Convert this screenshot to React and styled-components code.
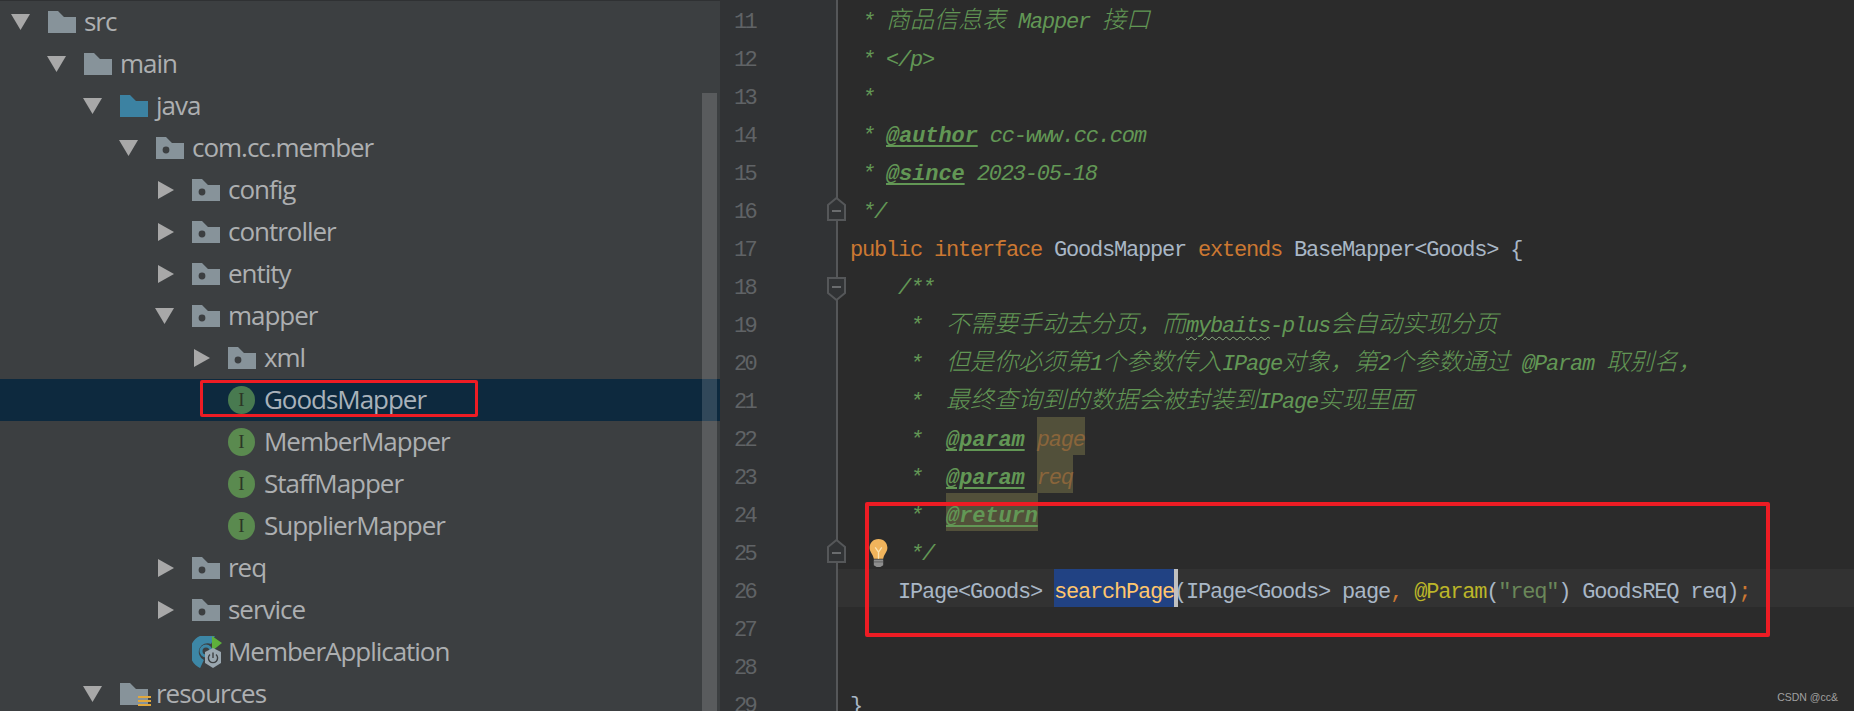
import styled, { createGlobalStyle } from "styled-components";

const GlobalStyle = createGlobalStyle`
  html, body {
    margin: 0;
    padding: 0;
    background: #2b2b2b;
    overflow: hidden;
  }
`;

const Screen = styled.div`
  position: relative;
  display: flex;
  width: 1854px;
  height: 711px;
  overflow: hidden;
  background: #2b2b2b;
`;

/* project tree */
const Tree = styled.div`
  position: relative;
  flex: 0 0 720px;
  padding-top: 1px;
  background: #3c3f41;
  box-shadow: inset 0 1px 0 #2f3133;
`;

const TreeRow = styled.div`
  display: flex;
  align-items: center;
  height: 42px;
  padding-left: ${(props) => props.depth * 36 + 11}px;
  background: ${(props) => (props.selected ? "#0d293e" : "transparent")};
`;

const ArrowSlot = styled.span`
  flex: 0 0 37px;
  display: flex;
  align-items: center;
  height: 42px;
`;

const Arrow = styled.svg`
  display: block;
  fill: #a8a8a8;
  margin-left: ${(props) => (props.open ? "0" : "3px")};
`;

const IconSlot = styled.span`
  flex: 0 0 28px;
  min-width: 0;
  display: flex;
  align-items: center;
  height: 42px;
  margin-right: 8px;
`;

const FolderIcon = styled.svg`
  flex: none;
  overflow: visible;
`;

const AppIcon = styled.svg`
  flex: none;
`;

const InterfaceBadge = styled.span`
  display: flex;
  flex: none;
  align-items: center;
  justify-content: center;
  width: 27px;
  height: 28px;
  border-radius: 50%;
  background: ${(props) => (props.selected ? "#487a50" : "#5a8a4f")};
  color: #2c3626;
  font: 400 19px "Liberation Serif", serif;
`;

const TreeLabel = styled.span`
  font-family: "Open Sans", sans-serif;
  font-size: 26px;
  letter-spacing: -1.03px;
  line-height: 40px;
  padding-bottom: 2px;
  color: ${(props) => (props.selected ? "#a9b2ba" : "#adafb1")};
  white-space: nowrap;
`;

const Scrollbar = styled.div`
  position: absolute;
  left: 702px;
  top: 93px;
  bottom: 0;
  width: 15px;
  background: rgba(255, 255, 255, 0.15);
`;

/* editor */
const Editor = styled.div`
  flex: 1;
  margin-top: -1px;
  position: relative;
`;

const Line = styled.div`
  position: relative;
  display: flex;
  height: 38px;
`;

const LineNumber = styled.div`
  flex: 0 0 118px;
  box-sizing: border-box;
  padding: 9px 0 0 14px;
  background: #313335;
  border-right: 2px solid #555759;
  color: #606366;
  font-family: "Liberation Mono", monospace;
  font-size: 22px;
  letter-spacing: -2.6px;
  line-height: 29px;
`;

const Code = styled.div`
  flex: 1;
  box-sizing: border-box;
  padding: 9px 0 0 12px;
  background: ${(props) => (props.current ? "#323232" : "transparent")};
  color: #a9b7c6;
  font-family: "Liberation Mono", monospace;
  font-size: 22px;
  letter-spacing: -1.2px;
  line-height: 29px;
  white-space: pre;
`;

const Comment = styled.span`
  color: #629755;
  font-style: italic;
`;

const Cjk = styled.span`
  font-family: "Noto Sans CJK SC", sans-serif;
  font-size: 24px;
  font-weight: 300;
  letter-spacing: 0;
  line-height: 0;
`;

const Tag = styled.span`
  color: #629755;
  font-style: italic;
  font-weight: 700;
  letter-spacing: -0.1px;
  text-decoration: underline;
  text-decoration-thickness: 2px;
  text-underline-offset: 3px;
`;

const Squiggle = styled.span`
  text-decoration: underline wavy #8fae84;
  text-decoration-thickness: 1px;
  text-underline-offset: 4px;
`;

const Mark = styled.span`
  display: inline-block;
  vertical-align: top;
  box-sizing: border-box;
  height: 38px;
  margin-top: -9px;
  padding-top: 9px;
  background: ${(props) => props.bg};
  color: ${(props) => props.fg};
`;

const Caret = styled.span`
  display: inline-block;
  vertical-align: top;
  width: 4px;
  height: 38px;
  margin: -9px -4px 0 0;
  background: #c0c0c0;
`;

const Keyword = styled.span`
  color: #cc7832;
`;

const Annotation = styled.span`
  color: #bbb529;
`;

const Str = styled.span`
  color: #6a8759;
`;

const FoldMark = styled.svg`
  position: absolute;
  left: 107px;
  top: ${(props) => props.top}px;
`;

const Bulb = styled.svg`
  position: absolute;
  left: 148px;
  top: 7px;
`;

const RedBox = styled.div`
  position: absolute;
  box-sizing: border-box;
  left: ${(props) => props.left}px;
  top: ${(props) => props.top}px;
  width: ${(props) => props.width}px;
  height: ${(props) => props.height}px;
  border: ${(props) => props.weight}px solid #ed1c24;
  border-radius: 2px;
`;

const Watermark = styled.div`
  position: absolute;
  right: 16px;
  top: 691px;
  color: #a0a0a0;
  font-family: "Liberation Sans", sans-serif;
  font-size: 10.5px;
  line-height: 12px;
`;

function OpenArrow() {
  return (
    <Arrow open width="19" height="16" viewBox="0 0 19 16">
      <path d="M0 0H19L9.5 16Z" />
    </Arrow>
  );
}

function ClosedArrow() {
  return (
    <Arrow width="16" height="18" viewBox="0 0 16 18">
      <path d="M0 0L16 9L0 18Z" />
    </Arrow>
  );
}

function Folder({ color = "#87939a", dot, resource }) {
  return (
    <FolderIcon width="28" height="22" viewBox="0 0 28 22">
      <path d="M0 0H10L16 6H28V22H0Z" fill={color} />
      {dot && <circle cx="10" cy="13" r="3.4" fill="#3c3f41" />}
      {resource && (
        <g fill="#e2a83c">
          <rect x="18" y="13" width="13" height="2" />
          <rect x="18" y="17" width="13" height="2" />
          <rect x="18" y="21" width="13" height="2" />
        </g>
      )}
    </FolderIcon>
  );
}

function SpringApp() {
  return (
    <AppIcon width="30" height="32" viewBox="0 0 30 32">
      <path
        d="M21 4A13 13 0 1 0 10 28"
        fill="none"
        stroke="#3d87a6"
        strokeWidth="9"
      />
      <circle cx="14" cy="15" r="5" fill="none" stroke="#3d87a6" strokeWidth="3" />
      <path d="M20 0L30 7L20 15Z" fill="#5eb03c" />
      <path d="M21 12L29 16V27L21 32L13 27V16Z" fill="#9aa7b0" />
      <path
        d="M18 18.5A4.6 4.6 0 1 0 24 18.5M21 16.5V22"
        fill="none"
        stroke="#3c3f41"
        strokeWidth="1.4"
      />
    </AppIcon>
  );
}

const treeRows = [
  { depth: 0, open: true, label: "src" },
  { depth: 1, open: true, label: "main" },
  { depth: 2, open: true, label: "java", color: "#3c82a2" },
  { depth: 3, open: true, label: "com.cc.member", dot: true },
  { depth: 4, open: false, label: "config", dot: true },
  { depth: 4, open: false, label: "controller", dot: true },
  { depth: 4, open: false, label: "entity", dot: true },
  { depth: 4, open: true, label: "mapper", dot: true },
  { depth: 5, open: false, label: "xml", dot: true },
  { depth: 5, kind: "interface", label: "GoodsMapper", selected: true },
  { depth: 5, kind: "interface", label: "MemberMapper" },
  { depth: 5, kind: "interface", label: "StaffMapper" },
  { depth: 5, kind: "interface", label: "SupplierMapper" },
  { depth: 4, open: false, label: "req", dot: true },
  { depth: 4, open: false, label: "service", dot: true },
  { depth: 4, kind: "app", label: "MemberApplication" },
  { depth: 2, open: true, label: "resources", resource: true },
];

function TreeItem({ row }) {
  return (
    <TreeRow depth={row.depth} selected={row.selected}>
      <ArrowSlot>
        {row.open === true && <OpenArrow />}
        {row.open === false && <ClosedArrow />}
      </ArrowSlot>
      <IconSlot>
        {row.kind === "interface" && <InterfaceBadge selected={row.selected}>I</InterfaceBadge>}
        {row.kind === "app" && <SpringApp />}
        {!row.kind && <Folder color={row.color} dot={row.dot} resource={row.resource} />}
      </IconSlot>
      <TreeLabel selected={row.selected}>{row.label}</TreeLabel>
    </TreeRow>
  );
}

const codeLines = [
  { no: 11, code: <Comment>{" * "}<Cjk>商品信息表</Cjk>{" Mapper "}<Cjk>接口</Cjk></Comment> },
  { no: 12, code: <Comment>{" * </p>"}</Comment> },
  { no: 13, code: <Comment>{" *"}</Comment> },
  { no: 14, code: <Comment>{" * "}<Tag>@author</Tag>{" cc-www.cc.com"}</Comment> },
  { no: 15, code: <Comment>{" * "}<Tag>@since</Tag>{" 2023-05-18"}</Comment> },
  { no: 16, fold: "end", code: <Comment>{" */"}</Comment> },
  {
    no: 17,
    code: (
      <>
        <Keyword>public interface </Keyword>GoodsMapper <Keyword>extends </Keyword>
        {"BaseMapper<Goods> {"}
      </>
    ),
  },
  { no: 18, fold: "start", code: <Comment>{"    /**"}</Comment> },
  {
    no: 19,
    code: (
      <Comment>
        {"     *  "}<Cjk>不需要手动去分页，而</Cjk><Squiggle>mybaits</Squiggle>-plus<Cjk>会自动实现分页</Cjk>
      </Comment>
    ),
  },
  {
    no: 20,
    code: (
      <Comment>
        {"     *  "}<Cjk>但是你必须第</Cjk>1<Cjk>个参数传入</Cjk>IPage<Cjk>对象，第</Cjk>2<Cjk>个参数通过</Cjk>{" @Param "}<Cjk>取别名，</Cjk>
      </Comment>
    ),
  },
  {
    no: 21,
    code: (
      <Comment>
        {"     *  "}<Cjk>最终查询到的数据会被封装到</Cjk>IPage<Cjk>实现里面</Cjk>
      </Comment>
    ),
  },
  {
    no: 22,
    code: (
      <Comment>
        {"     *  "}<Tag>@param</Tag>{" "}<Mark bg="#52503a" fg="#8a653b">page</Mark>
      </Comment>
    ),
  },
  {
    no: 23,
    code: (
      <Comment>
        {"     *  "}<Tag>@param</Tag>{" "}<Mark bg="#52503a" fg="#8a653b">req</Mark>
      </Comment>
    ),
  },
  {
    no: 24,
    code: (
      <Comment>
        {"     *  "}<Mark bg="#52503a"><Tag>@return</Tag></Mark>
      </Comment>
    ),
  },
  { no: 25, fold: "end", bulb: true, code: <Comment>{"     */"}</Comment> },
  {
    no: 26,
    current: true,
    code: (
      <>
        {"    IPage<Goods> "}
        <Mark bg="#214283" fg="#ffc66d">searchPage</Mark>
        <Caret />
        {"(IPage<Goods> page"}
        <Keyword>,</Keyword>{" "}
        <Annotation>@Param</Annotation>(<Str>"req"</Str>) GoodsREQ req)<Keyword>;</Keyword>
      </>
    ),
  },
  { no: 27, code: "" },
  { no: 28, code: "" },
  { no: 29, code: "}" },
];

function FoldIcon({ kind }) {
  const up = kind === "end";
  return (
    <FoldMark top={up ? 8 : 12} width="19" height="24" viewBox="0 0 19 24">
      <path
        d={up ? "M1 23V8L9.5 1L18 8V23Z" : "M1 1H18V16L9.5 23L1 16Z"}
        fill="#313335"
        stroke="#555759"
        strokeWidth="2"
      />
      <rect x="5" y={up ? 13 : 9} width="9" height="2" fill="#6a6c6e" />
    </FoldMark>
  );
}

function LightBulb() {
  return (
    <Bulb width="21" height="30" viewBox="0 0 21 32">
      <path
        d="M10.5 1C4.5 1 1 5.5 1 10.5C1 15 4.5 17 5.5 22H15.5C16.5 17 20 15 20 10.5C20 5.5 16.5 1 10.5 1Z"
        fill="#f0b45c"
      />
      <path d="M7 10L10.5 15L14 10M10.5 15V22" fill="none" stroke="#fbe3b0" strokeWidth="1.4" />
      <path d="M5.5 23H15.5V29L12.5 31H8.5L5.5 29Z" fill="#8e8e8e" />
      <path d="M5.5 25.5H15.5" stroke="#5f5f5f" strokeWidth="1" />
    </Bulb>
  );
}

export default function App() {
  return (
    <>
      <GlobalStyle />
      <Screen>
        <Tree>
          {treeRows.map((row) => (
            <TreeItem key={row.label} row={row} />
          ))}
          <Scrollbar />
        </Tree>
        <Editor>
          {codeLines.map((line) => (
            <Line key={line.no}>
              <LineNumber>{line.no}</LineNumber>
              <Code current={line.current}>{line.code}</Code>
              {line.fold && <FoldIcon kind={line.fold} />}
              {line.bulb && <LightBulb />}
            </Line>
          ))}
        </Editor>
        <RedBox left={200} top={380} width={278} height={37} weight={3} />
        <RedBox left={865} top={502} width={905} height={135} weight={4} />
        <Watermark>CSDN @cc&amp;</Watermark>
      </Screen>
    </>
  );
}
